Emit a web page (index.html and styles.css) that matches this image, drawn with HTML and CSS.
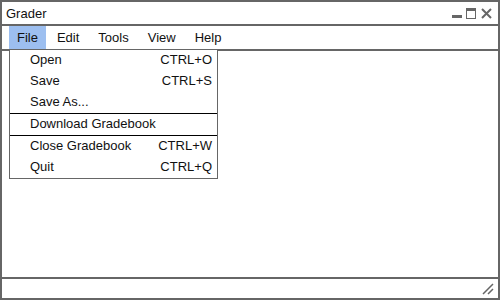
FILE: index.html
```html
<!DOCTYPE html>
<html lang="en">
<head>
    <meta charset="UTF-8">
    <title>Grader</title>
    <link rel="stylesheet" href="styles.css">
</head>
<body>
    <div class="window">
        <div class="titlebar">
            <span class="title">Grader</span>
            <div class="controls">
                <svg width="40" height="14" viewBox="0 0 40 14">
                    <rect x="0" y="8" width="10" height="3" fill="#666"/>
                    <rect x="14.5" y="1.5" width="9" height="10" fill="none" stroke="#666"/>
                    <rect x="14" y="1" width="10" height="3" fill="#666"/>
                    <path d="M30 2 L39 11 M39 2 L30 11" stroke="#666" stroke-width="2"/>
                </svg>
            </div>
        </div>

        <div class="menubar">
            <span class="menu-item active">File</span>
            <span class="menu-item">Edit</span>
            <span class="menu-item">Tools</span>
            <span class="menu-item">View</span>
            <span class="menu-item">Help</span>
        </div>

        <div class="content">
            <div class="dropdown">
                <div class="row"><span>Open</span><span>CTRL+O</span></div>
                <div class="row"><span>Save</span><span>CTRL+S</span></div>
                <div class="row"><span>Save As...</span><span></span></div>
                <div class="row sep"><span>Download Gradebook</span><span></span></div>
                <div class="row sep"><span>Close Gradebook</span><span>CTRL+W</span></div>
                <div class="row"><span>Quit</span><span>CTRL+Q</span></div>
            </div>
        </div>

        <div class="statusbar">
            <svg class="grip" width="12" height="12" viewBox="0 0 12 12">
                <path d="M1 11 L11 1 M6 11 L11 6" stroke="#666" stroke-width="1.5"/>
            </svg>
        </div>
    </div>
</body>
</html>
```

FILE: styles.css
```css
body {
    margin: 0;
    padding: 0;
    font-family: "Liberation Sans", Arial, sans-serif;
    font-size: 13px;
    color: #111;
    background-color: #fff;
}

.window {
    box-sizing: border-box;
    width: 500px;
    height: 300px;
    border: 2px solid #666;
    display: flex;
    flex-direction: column;
}

.titlebar {
    height: 22px;
    border-bottom: 2px solid #666;
    display: flex;
    align-items: center;
    justify-content: space-between;
    padding: 0 6px 0 4px;
}

.controls svg {
    display: block;
    margin-top: 1px;
}

.menubar {
    height: 23px;
    border-bottom: 2px solid #666;
    display: flex;
    padding-left: 7px;
}

.menu-item {
    display: flex;
    align-items: center;
    padding: 0 8px 1px;
    margin-right: 3px;
}

.menu-item.active {
    background-color: #9dbff0;
}

.content {
    flex: 1;
    position: relative;
}

.dropdown {
    position: absolute;
    left: 7px;
    top: -2px;
    width: 207px;
    border: 1px solid #666;
    background-color: #fff;
}

.row {
    box-sizing: border-box;
    height: 21px;
    display: flex;
    align-items: center;
    justify-content: space-between;
    padding: 0 5px 2px 20px;
}

.row.sep {
    height: 22px;
    border-top: 1px solid #000;
}

.statusbar {
    height: 19px;
    border-top: 2px solid #666;
    display: flex;
    justify-content: flex-end;
    align-items: center;
    padding-right: 4px;
}

.grip {
    display: block;
}
```
